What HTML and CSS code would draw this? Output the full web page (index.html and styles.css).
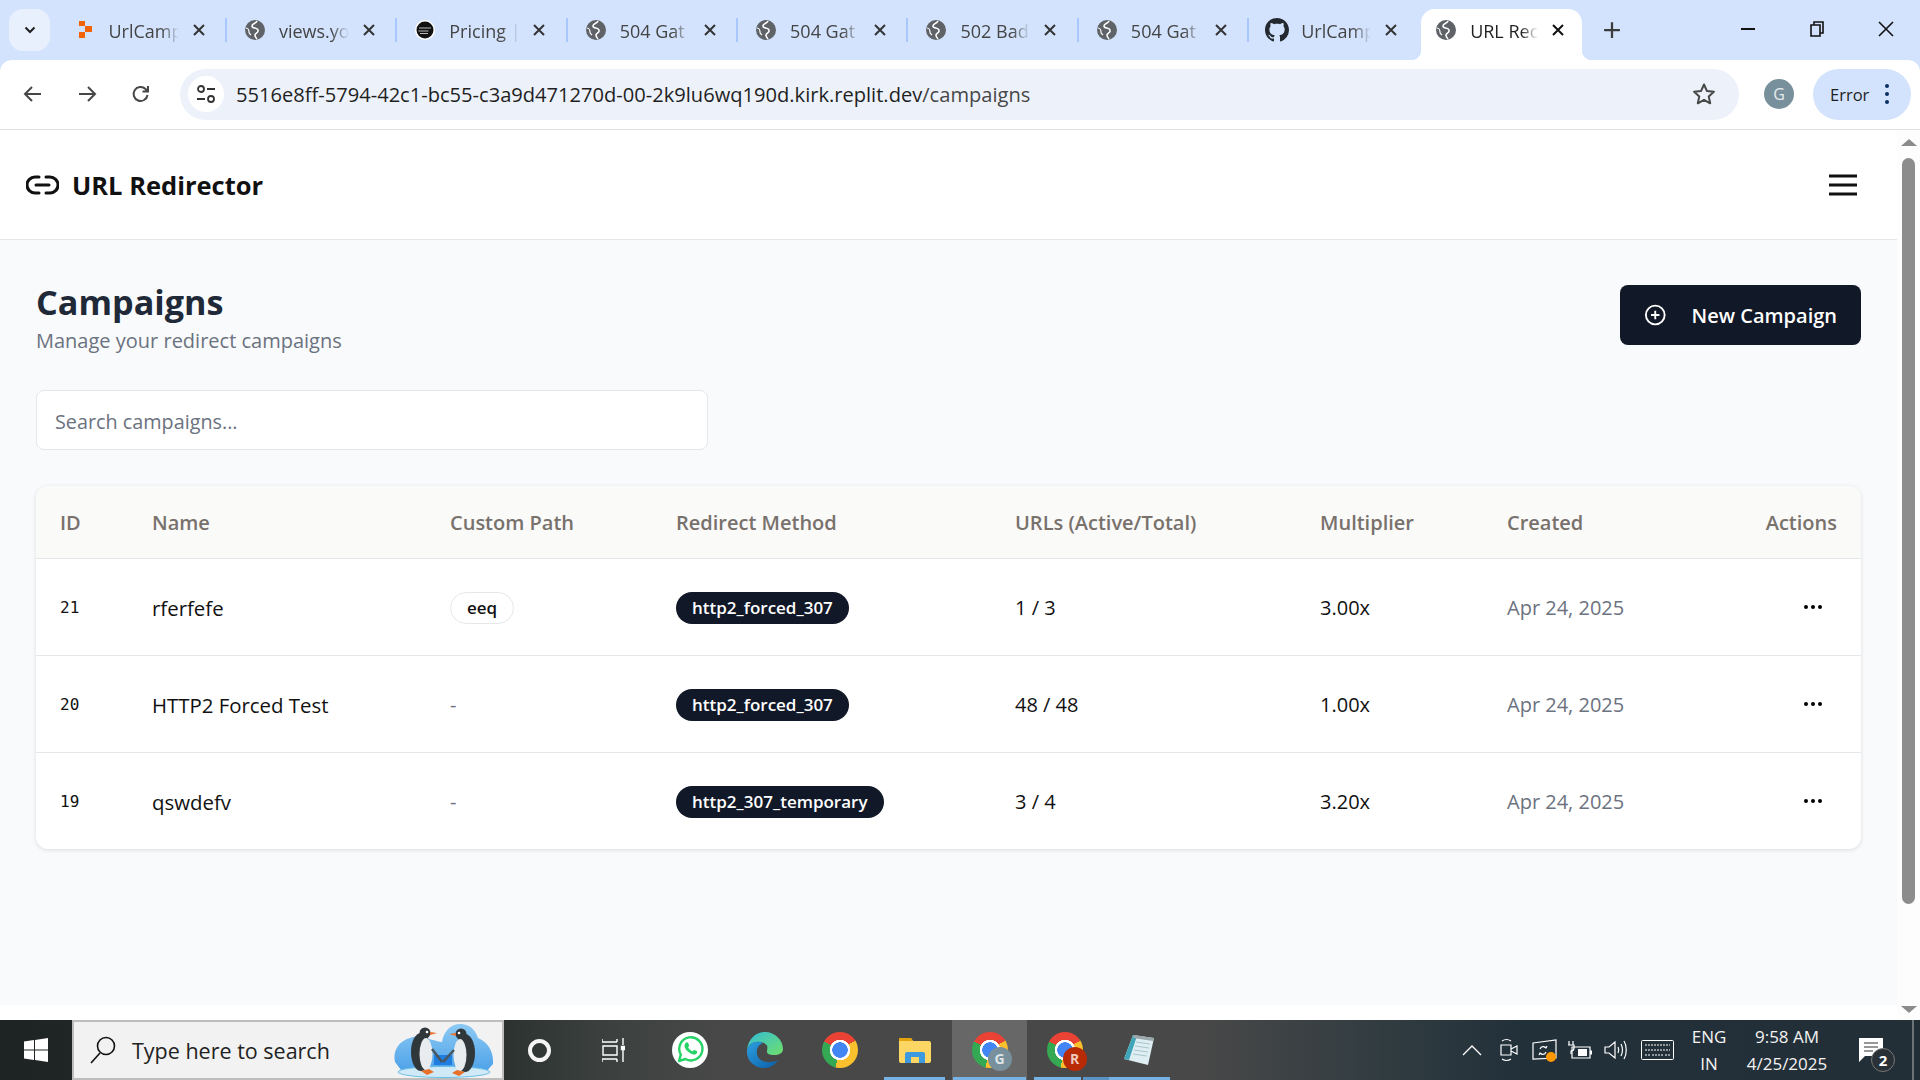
FILE: index.html
```html
<!DOCTYPE html>
<html lang="en">
<head>
    <meta charset="UTF-8">
    <meta name="viewport" content="width=device-width, initial-scale=1.0">
    <title>URL Redirector</title>
    <link rel="stylesheet" href="styles.css">
</head>
<body>
    <svg class="sprite" aria-hidden="true">
        <symbol id="globe" viewBox="0 0 20 20">
            <circle cx="10" cy="10" r="10" fill="#5f6368"/>
            <path d="M12 1c-1 3-5 2-5 5s5 1 6 4-3 3-3 5 1 3 2 4" fill="none" stroke="#fff" stroke-width="1.6"/>
            <path d="M1 8c2 0 3 2 3 4s1 2 2 3" fill="none" stroke="#fff" stroke-width="1.2"/>
        </symbol>
        <symbol id="close" viewBox="0 0 12 12">
            <path d="M1 1l10 10M11 1L1 11" stroke="currentColor" stroke-width="2"/>
        </symbol>
        <symbol id="dots" viewBox="0 0 18 4">
            <circle cx="2" cy="2" r="2"/><circle cx="9" cy="2" r="2"/><circle cx="16" cy="2" r="2"/>
        </symbol>
    </svg>

    <!-- browser tabs -->
    <div class="tabstrip">
        <div class="tab-scroll">
            <svg width="12" height="8" viewBox="0 0 12 8"><path d="M1.500 1.500L6 6l4.500-4.500" fill="none" stroke="#1f1f1f" stroke-width="2"/></svg>
        </div>
        <div class="tab">
            <svg class="favicon" viewBox="0 0 20 20"><path d="M4 1h6v5H4zM10 6h7v6h-7zM4 12h6v6H4z" fill="#f26207"/></svg>
            <span class="tab-title">UrlCamp</span>
            <svg class="tab-close"><use href="#close"/></svg>
        </div>
        <div class="tab-sep"></div>
        <div class="tab">
            <svg class="favicon"><use href="#globe"/></svg>
            <span class="tab-title">views.yo</span>
            <svg class="tab-close"><use href="#close"/></svg>
        </div>
        <div class="tab-sep"></div>
        <div class="tab">
            <svg class="favicon" viewBox="0 0 20 20">
                <circle cx="10" cy="10" r="10" fill="#fff"/><circle cx="10" cy="10" r="8.500" fill="#111"/>
                <path d="M4 8h12M3.500 11h10M5 13.500h8" stroke="#bbb" stroke-width="1.200"/>
            </svg>
            <span class="tab-title">Pricing |</span>
            <svg class="tab-close"><use href="#close"/></svg>
        </div>
        <div class="tab-sep"></div>
        <div class="tab">
            <svg class="favicon"><use href="#globe"/></svg>
            <span class="tab-title">504 Gat</span>
            <svg class="tab-close"><use href="#close"/></svg>
        </div>
        <div class="tab-sep"></div>
        <div class="tab">
            <svg class="favicon"><use href="#globe"/></svg>
            <span class="tab-title">504 Gat</span>
            <svg class="tab-close"><use href="#close"/></svg>
        </div>
        <div class="tab-sep"></div>
        <div class="tab">
            <svg class="favicon"><use href="#globe"/></svg>
            <span class="tab-title">502 Bad</span>
            <svg class="tab-close"><use href="#close"/></svg>
        </div>
        <div class="tab-sep"></div>
        <div class="tab">
            <svg class="favicon"><use href="#globe"/></svg>
            <span class="tab-title">504 Gat</span>
            <svg class="tab-close"><use href="#close"/></svg>
        </div>
        <div class="tab-sep"></div>
        <div class="tab">
            <svg class="favicon favicon-github" viewBox="0 0 16 16"><path fill="#24292f" d="M8 0C3.58 0 0 3.58 0 8c0 3.54 2.29 6.53 5.47 7.59.4.07.55-.17.55-.38 0-.19-.01-.82-.01-1.49-2.01.37-2.53-.49-2.69-.94-.09-.23-.48-.94-.82-1.13-.28-.15-.68-.52-.01-.53.63-.01 1.08.58 1.23.82.72 1.21 1.87.87 2.33.66.07-.52.28-.87.51-1.07-1.78-.2-3.64-.89-3.64-3.95 0-.87.31-1.59.82-2.15-.08-.2-.36-1.02.08-2.12 0 0 .67-.21 2.2.82.64-.18 1.32-.27 2-.27.68 0 1.36.09 2 .27 1.53-1.04 2.2-.82 2.2-.82.44 1.1.16 1.92.08 2.12.51.56.82 1.27.82 2.15 0 3.07-1.87 3.75-3.65 3.95.29.25.54.73.54 1.48 0 1.07-.01 1.93-.01 2.2 0 .21.15.46.55.38A8.013 8.013 0 0016 8c0-4.42-3.58-8-8-8z"/></svg>
            <span class="tab-title">UrlCamp</span>
            <svg class="tab-close"><use href="#close"/></svg>
        </div>
        <div class="tab tab-active">
            <svg class="favicon"><use href="#globe"/></svg>
            <span class="tab-title">URL Rec</span>
            <svg class="tab-close"><use href="#close"/></svg>
        </div>
        <svg class="new-tab" viewBox="0 0 16 16"><path d="M8 1v14M1 8h14" stroke="#3c3c3c" stroke-width="2"/></svg>
        <div class="win-controls">
            <div class="win-btn"><svg width="14" height="14" viewBox="0 0 14 14"><path d="M0 7h14" stroke="#111" stroke-width="2"/></svg></div>
            <div class="win-btn"><svg width="14" height="16" viewBox="0 0 14 16"><path d="M1 4h9v11H1zM4 4V1h9v11h-3" fill="none" stroke="#111" stroke-width="1.6"/></svg></div>
            <div class="win-btn"><svg width="16" height="16" viewBox="0 0 16 16"><path d="M1 1l14 14M15 1L1 15" stroke="#111" stroke-width="1.6"/></svg></div>
        </div>
    </div>

    <!-- address bar -->
    <div class="toolbar">
        <div class="nav-btn"><svg width="20" height="20" viewBox="0 0 20 20"><path d="M18 10H3M9 3l-7 7 7 7" fill="none" stroke="#474747" stroke-width="2"/></svg></div>
        <div class="nav-btn"><svg width="20" height="20" viewBox="0 0 20 20"><path d="M2 10h15M11 3l7 7-7 7" fill="none" stroke="#474747" stroke-width="2"/></svg></div>
        <div class="nav-btn"><svg width="20" height="20" viewBox="0 0 20 20"><path d="M16.500 11a7 7 0 1 1-2-6L17 7.500M17 2v5.500h-5.500" fill="none" stroke="#474747" stroke-width="2"/></svg></div>
        <div class="omnibox">
            <div class="site-info">
                <svg width="20" height="18" viewBox="0 0 20 18"><circle cx="5" cy="4" r="3" fill="none" stroke="#333" stroke-width="1.8"/><path d="M11 4h8M1 14h8" stroke="#333" stroke-width="1.8"/><circle cx="15" cy="14" r="3" fill="none" stroke="#333" stroke-width="1.8"/></svg>
            </div>
            <span class="url">5516e8ff-5794-42c1-bc55-c3a9d471270d-00-2k9lu6wq190d.kirk.replit.dev<span class="url-path">/campaigns</span></span>
            <svg class="star" width="24" height="24" viewBox="0 0 24 24"><path d="M12 2.500l2.900 6.400 7 .8-5.200 4.700 1.500 6.900-6.200-3.500-6.200 3.500 1.500-6.900-5.200-4.700 7-.8z" fill="none" stroke="#474747" stroke-width="2" stroke-linejoin="round"/></svg>
        </div>
        <div class="avatar">G</div>
        <div class="error-pill">
            <span>Error</span>
            <svg width="4" height="20" viewBox="0 0 4 20" fill="#0b2e63"><circle cx="2" cy="2" r="2"/><circle cx="2" cy="10" r="2"/><circle cx="2" cy="18" r="2"/></svg>
        </div>
    </div>

    <div class="viewport">
        <div class="page">
            <header class="app-header">
                <div class="brand">
                    <svg width="33" height="24" viewBox="0 0 33 24" fill="none" stroke="#111" stroke-width="3" stroke-linecap="round" stroke-linejoin="round"><path d="M13 4H9a8 8 0 0 0 0 16h4M20 4h4a8 8 0 0 1 0 16h-4M10 12h13"/></svg>
                    <span>URL Redirector</span>
                </div>
                <svg class="menu-icon" width="28" height="22" viewBox="0 0 28 22"><path d="M0 2h28M0 11h28M0 20h28" stroke="#111" stroke-width="3"/></svg>
            </header>

            <main class="content">
                <div class="page-head">
                    <div>
                        <h1>Campaigns</h1>
                        <p class="subtitle">Manage your redirect campaigns</p>
                    </div>
                    <button class="new-btn">
                        <svg width="24" height="24" viewBox="0 0 24 24" fill="none" stroke="#fff" stroke-width="2"><circle cx="12" cy="12" r="10"/><path d="M12 7.500v9M7.500 12h9"/></svg>
                        <span>New Campaign</span>
                    </button>
                </div>

                <input type="text" class="search-input" placeholder="Search campaigns...">

                <div class="card">
                    <table>
                        <thead>
                            <tr>
                                <th class="col-id">ID</th>
                                <th class="col-name">Name</th>
                                <th class="col-path">Custom Path</th>
                                <th class="col-method">Redirect Method</th>
                                <th class="col-urls">URLs (Active/Total)</th>
                                <th class="col-mult">Multiplier</th>
                                <th class="col-created">Created</th>
                                <th class="col-actions">Actions</th>
                            </tr>
                        </thead>
                        <tbody>
                            <tr>
                                <td class="cell-id">21</td>
                                <td class="cell-name">rferfefe</td>
                                <td><span class="badge badge-outline">eeq</span></td>
                                <td><span class="badge">http2_forced_307</span></td>
                                <td>1 / 3</td>
                                <td>3.00x</td>
                                <td class="cell-date">Apr 24, 2025</td>
                                <td class="cell-actions"><svg class="row-menu"><use href="#dots"/></svg></td>
                            </tr>
                            <tr>
                                <td class="cell-id">20</td>
                                <td class="cell-name">HTTP2 Forced Test</td>
                                <td class="cell-empty">-</td>
                                <td><span class="badge">http2_forced_307</span></td>
                                <td>48 / 48</td>
                                <td>1.00x</td>
                                <td class="cell-date">Apr 24, 2025</td>
                                <td class="cell-actions"><svg class="row-menu"><use href="#dots"/></svg></td>
                            </tr>
                            <tr>
                                <td class="cell-id">19</td>
                                <td class="cell-name">qswdefv</td>
                                <td class="cell-empty">-</td>
                                <td><span class="badge">http2_307_temporary</span></td>
                                <td>3 / 4</td>
                                <td>3.20x</td>
                                <td class="cell-date">Apr 24, 2025</td>
                                <td class="cell-actions"><svg class="row-menu"><use href="#dots"/></svg></td>
                            </tr>
                        </tbody>
                    </table>
                </div>
            </main>
            <div class="page-foot"></div>
        </div>
        <div class="scrollbar">
            <div class="arrow-up"></div>
            <div class="thumb"></div>
            <div class="arrow-down"></div>
        </div>
    </div>

    <!-- windows taskbar -->
    <div class="taskbar">
        <div class="start">
            <svg width="24" height="24" viewBox="0 0 24 24" fill="#fff"><path d="M0 3.400l10-1.400v9.400H0zM11 1.900L24 0v11.400H11zM0 12.600h10V22L0 20.600zM11 12.600h13V24l-13-1.900z"/></svg>
        </div>
        <div class="search-box">
            <svg width="26" height="28" viewBox="0 0 26 28" fill="none" stroke="#111" stroke-width="1.6"><circle cx="16" cy="10" r="8.500"/><path d="M10 17L1 27"/></svg>
            <span class="search-text">Type here to search</span>
            <svg class="penguins" width="100" height="56" viewBox="0 0 100 56">
                <defs>
                    <linearGradient id="sky" x1="0" y1="0" x2="0" y2="1"><stop offset="0" stop-color="#8ccaf4"/><stop offset="1" stop-color="#4a9fe8"/></linearGradient>
                </defs>
                <path d="M1 40C-2 26 8 18 16 16 24 12 36 18 48 20 50 8 58 1 68 2 78 3 82 10 84 16 94 20 100 30 99 42L90 52H10z" fill="url(#sky)"/>
                <path d="M40 33h18v10H40z" fill="#1f7ee0"/>
                <ellipse cx="50" cy="50" rx="46" ry="5.500" fill="#cfe9f6" stroke="#6cc0e6"/>
                <ellipse cx="27" cy="30" rx="10" ry="19" fill="#30373b"/>
                <circle cx="31" cy="11" r="5.500" fill="#30373b"/>
                <path d="M36 10l7 1-7 2z" fill="#e8702a"/>
                <ellipse cx="32" cy="32" rx="6.500" ry="16" fill="#e8ecef"/>
                <circle cx="33" cy="10" r="1.300" fill="#fff"/>
                <path d="M38 27l10 13" stroke="#4a545b" stroke-width="2.500"/>
                <path d="M27 49l8-2 5 3-7 3z" fill="#e8702a"/>
                <ellipse cx="71" cy="31" rx="10" ry="19" fill="#30373b"/>
                <circle cx="67" cy="12" r="5.500" fill="#30373b"/>
                <path d="M62 11l-7 1 7 2z" fill="#e8702a"/>
                <ellipse cx="66" cy="33" rx="6.500" ry="16" fill="#e8ecef"/>
                <circle cx="65" cy="11" r="1.300" fill="#fff"/>
                <path d="M60 28l-11 12" stroke="#4a545b" stroke-width="2.500"/>
                <path d="M71 50l-8-2-5 3 7 3z" fill="#e8702a"/>
            </svg>
        </div>
        <div class="task-slot slot-cortana"><div class="cortana"></div></div>
        <div class="task-slot slot-view">
            <svg width="23" height="24" viewBox="0 0 23 24" fill="none" stroke="#fff" stroke-width="1.4"><path d="M0 4h15M15 1v3M0 1v3M1 8h14v9H1zM0 21h15M0 24v-3M15 24v-3M21 0v7M21 12v12"/><path d="M19.500 8.500h3v3h-3z" fill="#fff"/></svg>
        </div>
        <div class="task-slot">
            <svg width="36" height="36" viewBox="0 0 36 36">
                <circle cx="18" cy="18" r="18" fill="#fff"/>
                <path d="M7 29l1.800-6.400A11.600 11.600 0 1 1 13.300 27z" fill="none" stroke="#25d366" stroke-width="2.400" stroke-linejoin="round"/>
                <path d="M13.500 11c1-1 2.200-.8 2.600 0l1 2.200c.2.600-.6 1.400-1 2 .8 1.800 2.400 3.200 4.400 4 .6-.5 1.300-1.400 1.900-1.200l2.300 1.100c.8.400.7 1.700 0 2.500-1.300 1.400-3.300 1.300-5.600.2-3.400-1.600-5.500-4-6.400-6.700-.4-1.500 0-3 .8-4.100z" fill="#25d366"/>
            </svg>
        </div>
        <div class="task-slot">
            <svg width="37" height="36" viewBox="0 0 37 36">
                <defs>
                    <linearGradient id="edgeA" x1="0" y1="0" x2="1" y2="1"><stop offset="0" stop-color="#33bcd8"/><stop offset="1" stop-color="#6fe06a"/></linearGradient>
                    <linearGradient id="edgeB" x1="0" y1="0" x2="1" y2="1"><stop offset="0" stop-color="#2b9fe0"/><stop offset="1" stop-color="#0c5ea8"/></linearGradient>
                </defs>
                <path d="M1 18C2 7 10 0 19 0c10 0 18 8 18 17 0 4-4 6-9 6-4 0-7-1-7-3 0-5 2-6-3-9-8-3-15 0-17 7z" fill="url(#edgeA)"/>
                <path d="M1 18c2-7 9-10 16-7-5 2-7 6-6 11 1 6 7 9 14 8 3 0 5-1 7-2-3 5-8 8-14 8C8 36 0 28 1 18z" fill="url(#edgeB)"/>
            </svg>
        </div>
        <div class="task-slot"><div class="chrome"></div></div>
        <div class="task-slot task-running">
            <svg width="32" height="26" viewBox="0 0 32 26">
                <path d="M0 3a2 2 0 0 1 2-2h10l2 3h16a2 2 0 0 1 2 2v18a2 2 0 0 1-2 2H2a2 2 0 0 1-2-2z" fill="#fdd663"/>
                <path d="M0 1h12l2 3H0z" fill="#e3a40c"/>
                <path d="M6 26V17a2 2 0 0 1 2-2h16a2 2 0 0 1 2 2v9h-6v-6h-8v6z" fill="#3d9ae0"/>
            </svg>
        </div>
        <div class="task-slot task-running task-active">
            <div class="chrome"><span class="chrome-badge badge-g">G</span></div>
        </div>
        <div class="task-slot task-running task-multi">
            <div class="chrome"><span class="chrome-badge badge-r">R</span></div>
        </div>
        <div class="task-slot task-running">
            <svg width="32" height="32" viewBox="0 0 32 32">
                <path d="M9 1l21 3-6 27L0 25z" fill="#dfeef2"/>
                <path d="M0 25L9 1l4 1L5 26z" fill="#3fa5b8"/>
                <path d="M12 8l14 2M11 12l14 2M10 16l14 2M9 20l14 2" stroke="#a9c6cf"/>
                <path d="M10 1l20 3-1 3L9 4z" fill="#9aa7ab"/>
            </svg>
        </div>

        <div class="tray">
            <div class="tray-slot slot-chevron"><svg width="20" height="11" viewBox="0 0 20 11" fill="none" stroke="#fff" stroke-width="1.3"><path d="M1 10l9-9 9 9"/></svg></div>
            <div class="tray-slot slot-camera">
                <svg width="18" height="24" viewBox="0 0 18 24" fill="none" stroke="#fff" stroke-width="1.2"><path d="M1 7h10v10H1zM11 11l6-3v8l-6-3zM2 3c3-2 6-2 9 0M2 21c3 2 6 2 9 0"/></svg>
            </div>
            <div class="tray-slot slot-sync">
                <svg width="26" height="24" viewBox="0 0 26 24" fill="none" stroke="#fff" stroke-width="1.2"><path d="M1 5l23-3v18L1 21z"/><path d="M8 11c1-3 5-3 6-1M14 14c-1 3-5 3-6 1M12 9l2 1 1-2M10 16l-2-1-1 2"/><circle cx="19" cy="19" r="5" fill="#ff9800" stroke="none"/></svg>
            </div>
            <div class="tray-slot slot-battery">
                <svg width="24" height="18" viewBox="0 0 24 18" fill="none" stroke="#fff" stroke-width="1.2"><path d="M4 6h18v11H4z"/><path d="M22 10h2v3h-2" fill="#fff"/><path d="M10 8h9v7h-9z" fill="#fff" stroke="none"/><path d="M1 0v4M5 0v4M0 4h6v3c0 2-1 3-3 3v3"/></svg>
            </div>
            <div class="tray-slot slot-speaker">
                <svg width="24" height="20" viewBox="0 0 24 20" fill="none" stroke="#fff" stroke-width="1.2"><path d="M1 7h4l6-5v16l-6-5H1zM14 7c1 2 1 4 0 6M17 4c2 4 2 8 0 12M20 1c3 5 3 13 0 18"/></svg>
            </div>
            <div class="tray-slot slot-keyboard">
                <svg width="33" height="20" viewBox="0 0 33 20" fill="none" stroke="#fff" stroke-width="1"><rect x=".5" y=".5" width="32" height="19" rx="1"/><path d="M4 5h25M4 10h25M4 15h5M11 15h11M24 15h5" stroke-dasharray="2 1"/></svg>
            </div>
            <div class="tray-text slot-lang"><span>ENG</span><span>IN</span></div>
            <div class="tray-text slot-clock"><span>9:58 AM</span><span>4/25/2025</span></div>
            <div class="tray-slot slot-notify">
                <svg width="24" height="24" viewBox="0 0 24 24"><path d="M0 0h24v18H6l-6 6z" fill="#fff"/><path d="M5 5h14M5 9h14M5 13h9" stroke="#333" stroke-width="1.2"/></svg>
                <span class="notify-count">2</span>
            </div>
            <div class="show-desktop"></div>
        </div>
    </div>
</body>
</html>
```

FILE: styles.css
```css
* {
    box-sizing: border-box;
}
body {
    margin: 0;
    height: 100vh;
    overflow: hidden;
    display: flex;
    flex-direction: column;
    background-color: #d3e3fd;
    font-family: "Open Sans", "Noto Sans", sans-serif;
    color: #111;
}
.sprite {
    width: 0;
    height: 0;
    position: absolute;
}

/* tabs */
.tabstrip {
    height: 60px;
    flex: none;
    display: flex;
    align-items: flex-start;
    padding: 9px 0 0 9px;
}
.tab-scroll {
    width: 41px;
    height: 42px;
    margin-right: 6.5px;
    background-color: #e9f0fd;
    border-radius: 14px;
    display: flex;
    align-items: center;
    justify-content: center;
}
.tab {
    width: 168.4px;
    height: 51px;
    padding: 0 0 9px 18px;
    display: flex;
    align-items: center;
    color: #444;
    font-size: 18px;
    position: relative;
}
.tab-sep {
    width: 2px;
    height: 24px;
    margin-top: 9px;
    background-color: #a8c7fa;
}
.favicon {
    width: 20px;
    height: 20px;
    flex: none;
}
.favicon-github {
    width: 24px;
    height: 24px;
    margin-left: -2px;
    margin-right: -2px;
}
.tab-title {
    width: 70px;
    margin: 2px 0 0 14px;
    white-space: nowrap;
    -webkit-mask-image: linear-gradient(to right, #000 75%, transparent);
    mask-image: linear-gradient(to right, #000 75%, transparent);
}
.tab-close {
    width: 12px;
    height: 12px;
    flex: none;
    margin-left: 14px;
    color: #333;
}
.tab-active {
    width: 161px;
    margin-left: 3.5px;
    padding-left: 15px;
    background-color: #fff;
    border-radius: 14px 14px 0 0;
    color: #1f1f1f;
}
.tab-active .tab-title {
    width: 68px;
}
.tab-active .tab-close {
    margin-left: 14px;
    color: #111;
}
.tab-active::before,
.tab-active::after {
    content: "";
    position: absolute;
    bottom: 0;
    width: 10px;
    height: 10px;
}
.tab-active::before {
    left: -10px;
    background: radial-gradient(circle at 0 0, transparent 10px, #fff 10.5px);
}
.tab-active::after {
    right: -10px;
    background: radial-gradient(circle at 100% 0, transparent 10px, #fff 10.5px);
}
.new-tab {
    width: 18px;
    height: 18px;
    margin: 12px 0 0 21px;
}
.win-controls {
    margin-left: auto;
    display: flex;
}
.win-btn {
    width: 69px;
    height: 40px;
    display: flex;
    align-items: center;
    justify-content: center;
}

/* address bar */
.toolbar {
    height: 70px;
    flex: none;
    display: flex;
    align-items: center;
    padding: 0 0 1px 6px;
    background-color: #fff;
    border-bottom: 1px solid #e0e0e0;
    border-radius: 12px 12px 0 0;
}
.nav-btn {
    width: 54px;
    display: flex;
    justify-content: center;
}
.omnibox {
    width: 1559px;
    height: 51px;
    margin-left: 12px;
    padding: 0 23px 0 8px;
    display: flex;
    align-items: center;
    background-color: #edf2fa;
    border-radius: 26px;
}
.site-info {
    width: 36px;
    height: 36px;
    background-color: #fff;
    border-radius: 50%;
    display: flex;
    align-items: center;
    justify-content: center;
}
.url {
    margin-left: 12px;
    font-size: 20.1px;
    color: #1f1f1f;
    white-space: nowrap;
}
.url-path {
    color: #474747;
}
.star {
    margin-left: auto;
}
.avatar {
    width: 30px;
    height: 30px;
    margin-left: 25px;
    border-radius: 50%;
    background-color: #78909c;
    color: #e8edf0;
    font-size: 16px;
    display: flex;
    align-items: center;
    justify-content: center;
}
.error-pill {
    width: 98px;
    height: 51px;
    margin-left: 19px;
    padding: 0 22px 0 17px;
    border-radius: 26px;
    background-color: #d3e3fd;
    display: flex;
    align-items: center;
    justify-content: space-between;
    font-size: 16.5px;
    color: #1f1f1f;
}

/* page */
.viewport {
    flex: 1;
    min-height: 0;
    display: flex;
    background-color: #fff;
}
.page {
    flex: 1;
    display: flex;
    flex-direction: column;
}
.app-header {
    height: 110px;
    flex: none;
    padding: 0 40px 0 26px;
    display: flex;
    align-items: center;
    justify-content: space-between;
    background-color: #fff;
    border-bottom: 1px solid #e5e7eb;
}
.brand {
    display: flex;
    align-items: center;
    gap: 13px;
    font-size: 25.5px;
    font-weight: 700;
}
.content {
    flex: 1;
    padding: 45px 36px 0 36px;
    background-color: #f9fafb;
}
.page-foot {
    height: 15px;
    flex: none;
    background-color: #fff;
}
.page-head {
    display: flex;
    justify-content: space-between;
    align-items: flex-start;
    height: 70px;
    margin-bottom: 35px;
}
h1 {
    margin: 0;
    font-size: 34.2px;
    line-height: 34px;
    font-weight: 700;
    color: #1f2937;
}
.subtitle {
    margin: 7px 0 0;
    font-size: 20px;
    line-height: 30px;
    color: #6b7280;
}
.new-btn {
    width: 241px;
    height: 60px;
    padding: 0 24px;
    display: flex;
    align-items: center;
    gap: 25px;
    border: none;
    border-radius: 8px;
    background-color: #111827;
    color: #fff;
    font-family: inherit;
    font-size: 20px;
    font-weight: 600;
    white-space: nowrap;
    cursor: pointer;
}
.search-input {
    display: block;
    width: 672px;
    height: 60px;
    padding: 3px 18px 0;
    border: 1px solid #e5e7eb;
    border-radius: 8px;
    background-color: #fff;
    font-family: inherit;
    font-size: 19.8px;
}
.search-input::placeholder {
    color: #6b7280;
    opacity: 1;
}
.card {
    margin-top: 36px;
    border-radius: 12px;
    overflow: hidden;
    background-color: #fff;
    box-shadow: 0 1px 4px rgba(0, 0, 0, 0.12);
}
table {
    width: 100%;
    table-layout: fixed;
    border-collapse: collapse;
}
th, td {
    padding: 2px 24px 0;
    text-align: left;
    font-size: 20px;
}
th {
    height: 72px;
    font-weight: 600;
    color: #78716c;
    background-color: #fafaf9;
    border-bottom: 1px solid #e5e7eb;
}
td {
    height: 97px;
}
tbody tr + tr td {
    border-top: 1px solid #e5e7eb;
}
.col-id { width: 92px; }
.col-name { width: 298px; }
.col-path { width: 226px; }
.col-method { width: 339px; }
.col-urls { width: 305px; }
.col-mult { width: 187px; }
.col-created { width: 220px; }
.col-actions { text-align: right; }
.cell-id {
    font-family: "DejaVu Sans Mono", "Liberation Mono", monospace;
    font-size: 16px;
}
.cell-name {
    font-size: 20.4px;
    font-weight: 500;
}
.cell-empty {
    color: #6b7280;
}
.cell-date {
    color: #6b7280;
}
.cell-actions {
    text-align: right;
    padding-right: 39px;
}
.row-menu {
    width: 18px;
    height: 4px;
    display: inline-block;
    vertical-align: 6px;
}
.badge {
    display: inline-block;
    height: 32px;
    padding: 0 16px;
    line-height: 31px;
    border-radius: 16px;
    background-color: #111827;
    color: #fff;
    font-size: 17px;
    font-weight: 600;
    vertical-align: 3px;
}
.badge-outline {
    background-color: #fff;
    color: #111;
    border: 1px solid #e5e7eb;
    line-height: 29px;
    vertical-align: 1px;
}

/* page scrollbar */
.scrollbar {
    width: 23px;
    flex: none;
    padding: 9px 5px 0;
    background-color: #fdfdfd;
    display: flex;
    flex-direction: column;
    align-items: center;
}
.arrow-up {
    border: 8px solid transparent;
    border-top: none;
    border-bottom: 7px solid #8c8c8c;
}
.thumb {
    width: 13px;
    height: 746px;
    margin-top: 12px;
    background-color: #8c8c8c;
    border-radius: 7px;
}
.arrow-down {
    margin-top: auto;
    margin-bottom: 7px;
    border: 8px solid transparent;
    border-bottom: none;
    border-top: 7px solid #8c8c8c;
}

/* taskbar */
.taskbar {
    height: 60px;
    flex: none;
    display: flex;
    align-items: center;
    color: #fff;
    background: linear-gradient(to right, #1e2424 0, #2c3230 504px, #3b403f 600px, #484848 720px, #484848 1200px, #2f3b40 1400px, #22303a 1520px, #232f37 100%);
}
.start {
    width: 72px;
    display: flex;
    justify-content: center;
}
.search-box {
    width: 432px;
    height: 60px;
    padding: 0 8px 0 16px;
    display: flex;
    align-items: center;
    background-color: #f2f2f2;
    border: 2px solid #bdbdbd;
}
.search-text {
    margin-left: 16px;
    font-size: 21.5px;
    color: #222;
    white-space: nowrap;
}
.penguins {
    margin-left: auto;
}
.task-slot {
    width: 75px;
    height: 60px;
    display: flex;
    align-items: center;
    justify-content: center;
    position: relative;
}
.slot-cortana {
    width: 70px;
}
.slot-view {
    width: 78px;
}
.cortana {
    width: 23px;
    height: 23px;
    border: 4px solid #f5f5f5;
    border-radius: 50%;
}
.task-running::after {
    content: "";
    position: absolute;
    left: 7px;
    right: 7px;
    bottom: 0;
    height: 3px;
    background-color: #76b2e4;
}
.task-active {
    background-color: #676767;
}
.task-active::after {
    left: 1px;
    right: 1px;
}
.task-multi::after {
    right: -7px;
    left: 7px;
    background: linear-gradient(to right, #76b2e4 47px, transparent 47px, transparent 49px, #5a93c4 49px);
}
.chrome {
    width: 36px;
    height: 36px;
    border-radius: 50%;
    position: relative;
    background:
        radial-gradient(circle, #4285f4 0, #4285f4 7.5px, #fff 8px, #fff 10px, transparent 10.5px),
        conic-gradient(#ea4335 0 58deg, #fbc02d 58deg 195deg, #34a853 195deg 298deg, #ea4335 298deg);
}
.chrome-badge {
    position: absolute;
    right: -4px;
    bottom: -3px;
    width: 24px;
    height: 24px;
    border-radius: 50%;
    font-size: 14px;
    font-weight: 700;
    line-height: 24px;
    text-align: center;
    color: #dfe5e8;
}
.badge-g {
    background-color: #78909c;
}
.badge-r {
    background-color: #b92a06;
    color: #f0c8bc;
}
.tray {
    margin-left: auto;
    display: flex;
    align-items: center;
    height: 60px;
}
.tray-slot {
    display: flex;
    align-items: center;
    justify-content: center;
    height: 60px;
    position: relative;
}
.slot-chevron { width: 36px; }
.slot-camera { width: 38px; }
.slot-sync { width: 34px; }
.slot-battery { width: 36px; }
.slot-speaker { width: 36px; }
.slot-keyboard { width: 46px; }
.slot-notify { width: 70px; }
.tray-text {
    display: flex;
    flex-direction: column;
    align-items: center;
    gap: 4px;
    font-size: 17px;
    line-height: 23px;
    color: #f3f3f3;
}
.slot-lang { width: 58px; }
.slot-clock { width: 98px; }
.notify-count {
    position: absolute;
    left: 35px;
    top: 28px;
    width: 24px;
    height: 24px;
    border-radius: 50%;
    border: 1px solid #777;
    background-color: #2a3136;
    font-size: 15px;
    font-weight: 700;
    line-height: 22px;
    text-align: center;
}
.show-desktop {
    width: 14px;
    height: 60px;
    background: linear-gradient(to right, transparent 6px, #6d7478 6px, #6d7478 8px, transparent 8px);
}
```
